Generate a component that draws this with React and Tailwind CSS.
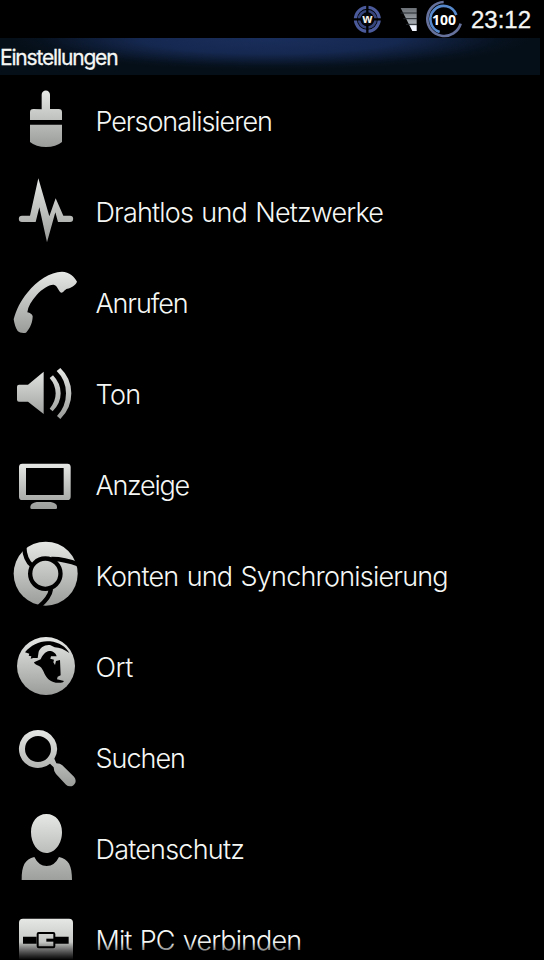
const shapes = {
  brush: {
    viewBox: "0 -12 288 273",
    top: 33,
    bottom: 201,
    body: (
      <path d="M125 88V44a12.500 12.500 0 0 1 25 0V87H176Q186 87 186 97V120H90V97Q90 87 100 87ZM90 134H186V186Q168 201 138 201T90 186Z" />
    ),
  },
  pulse: {
    viewBox: "0 261 288 273",
    top: 295,
    bottom: 487,
    body: (
      <path d="M66 407H90L115 295L148 409L167 355L190 407H210A9.500 9.500 0 0 1 210 426H174L166 397L141 487L118 382L107 426H66A9.500 9.500 0 0 1 66 407Z" />
    ),
  },
  phone: {
    viewBox: "0 -6 288 273",
    top: 35,
    bottom: 219,
    body: (
      <path d="M41 178C48 150 62 122 82 98C112 60 150 37 186 35C208 36 224 50 231 65C226 77 212 84 202 86C194 88 190 98 184 98C176 96 172 76 163 75C150 72 128 86 110 105C94 123 84 140 82 157C90 159 97 162 98 169C98 184 92 204 78 218C68 220 58 218 53 213C47 204 43 192 41 178Z" />
    ),
  },
  sound: {
    viewBox: "0 267 288 273",
    top: 324,
    bottom: 477,
    body: (
      <>
        <path d="M57 374H84L131 335V462L84 425H57Q51 425 51 419V380Q51 374 57 374Z" />
        <path d="M149 354L159 346Q182 370 182 400T158 454L149 446Q167 425 167 400T149 354ZM170 333L181 324Q214 355 214 400T181 477L171 468Q198 440 198 400T170 333Z" />
      </>
    ),
  },
  display: {
    viewBox: "0 -30 288 273",
    top: 41,
    bottom: 178,
    body: (
      <>
        <path
          fillRule="evenodd"
          d="M67 41H202Q212 41 212 51V140Q212 150 202 150H67Q57 150 57 140V51Q57 41 67 41ZM78 54V135H191V54Z"
        />
        <path d="M110 156H152Q171 160 171 170V173Q171 177 167 177H95Q91 177 91 173V170Q92 160 110 156Z" />
      </>
    ),
  },
  sync: {
    viewBox: "0 243 288 273",
    top: 274,
    bottom: 468,
    body: (
      <>
        <circle cx="137" cy="371" r="96" />
        <g fill="none" stroke="#000" strokeWidth="13">
          <circle cx="136" cy="371" r="45.500" />
          <path d="M73 292Q74 328 96 347M154 327Q190 326 238 344M153 417Q150 442 117 470" />
        </g>
      </>
    ),
  },
  globe: {
    viewBox: "0 -9 288 273",
    top: 35,
    bottom: 210,
    body: (
      <>
        <circle cx="138" cy="123" r="87" />
        <path
          fill="#000"
          d="M75 82C94 58 122 46 150 49C178 52 198 66 208 84C194 74 178 67 164 67L150 60C134 58 120 68 116 80L113 99L100 99L92 101L94 94L86 92L88 86Z"
        />
        <path
          fill="#000"
          d="M102 112L122 103C126 92 136 79 148 78C158 78 168 84 170 94L153 94L151 101L162 104L160 112L165 120L168 108L180 105L182 151L173 155L171 163L183 166L192 168L189 172C172 176 157 172 147 164C134 152 132 139 124 128C116 120 104 120 102 112Z"
        />
      </>
    ),
  },
  search: {
    viewBox: "0 264 288 273",
    top: 315,
    bottom: 484,
    body: (
      <path
        fillRule="evenodd"
        d="M114 315A57 57 0 0 1 163 401L169 415Q181 415 187 421L222 455Q229 463 226 473Q221 484 210 484Q203 484 198 479L168 447Q161 439 161 427L150 416A57 57 0 1 1 114 315ZM114 333A39 39 0 1 0 114 411A39 39 0 1 0 114 333Z"
      />
    ),
  },
  person: {
    viewBox: "0 12 288 273",
    top: 42,
    bottom: 250,
    body: (
      <path d="M139 42C168 42 186 66 186 96C186 130 166 159 139 159S93 130 93 96C93 66 111 42 139 42ZM103 171Q116 198 140 198T177 171C206 178 216 196 216 240H65C65 196 75 178 103 171Z" />
    ),
  },
  usb: {
    viewBox: "0 285 288 273",
    top: 356,
    bottom: 520,
    body: (
      <>
        <rect x="57" y="356" width="162" height="160" rx="12" />
        <path fill="#000" d="M69 410H110V431H69ZM165 410H206V431H165Z" />
        <rect x="113" y="399" width="50" height="43" rx="3" fill="none" stroke="#000" strokeWidth="6" />
        <path fill="#000" d="M139 416H163V425H139Z" />
      </>
    ),
  },
};

const items = [
  { icon: "brush", label: "Personalisieren", tracking: "tracking-[-1.050px]" },
  { icon: "pulse", label: "Drahtlos und Netzwerke", tracking: "tracking-[-0.820px]" },
  { icon: "phone", label: "Anrufen", tracking: "tracking-[-1.100px]" },
  { icon: "sound", label: "Ton", tracking: "tracking-[-0.600px]" },
  { icon: "display", label: "Anzeige", tracking: "tracking-[-1.250px]" },
  { icon: "sync", label: "Konten und Synchronisierung", tracking: "tracking-[-0.800px]" },
  { icon: "globe", label: "Ort", tracking: "tracking-[-0.400px]" },
  { icon: "search", label: "Suchen", tracking: "tracking-[-1px]" },
  { icon: "person", label: "Datenschutz", tracking: "tracking-[-0.780px]" },
  { icon: "usb", label: "Mit PC verbinden", tracking: "tracking-[-0.880px]" },
];

function ItemIcon({ name }) {
  const { viewBox, top, bottom, body } = shapes[name];
  return (
    <svg viewBox={viewBox} className="w-24 h-[91px] shrink-0" fill={`url(#metal-${name})`}>
      <defs>
        <linearGradient id={`metal-${name}`} gradientUnits="userSpaceOnUse" x1="0" x2="0" y1={top} y2={bottom}>
          <stop offset="0" stopColor="#e6e8e6" />
          <stop offset="1" stopColor="#9a9c9a" />
        </linearGradient>
      </defs>
      {body}
    </svg>
  );
}

function StatusIcons() {
  return (
    <svg viewBox="0 0 360 114" className="w-[120px] h-[38px]">
      <defs>
        <linearGradient id="signal" x1="0" x2="0" y1="0" y2="1">
          <stop offset="0" stopColor="#6b7076" />
          <stop offset="0.700" stopColor="#a9afb6" />
          <stop offset="0.800" stopColor="#f2f6ff" />
        </linearGradient>
      </defs>

      {/* WLAN */}
      <g fill="none" stroke="#4a5a9a">
        <circle cx="70" cy="58" r="36" strokeWidth="9" />
        <circle cx="70" cy="58" r="25" strokeWidth="8" stroke="#36457c" />
        <path d="M70 14V102M26 58H114" stroke="#000" strokeWidth="7" />
      </g>
      <circle cx="70" cy="58" r="18" fill="#05060c" />
      <text x="70" y="68" textAnchor="middle" fontSize="36" fontWeight="700" fontFamily="Open Sans, sans-serif" fill="#f6f1e6">w</text>

      {/* signal */}
      <path d="M170 24H218V93H205Z" fill="url(#signal)" />
      <path d="M170 39H219M178 56H219M186 73H219" stroke="#23282e" strokeWidth="3" />

      {/* battery */}
      <g fill="none">
        <path d="M299 6A51 51 0 1 0 350 71" stroke="#66719c" strokeWidth="8" />
        <path d="M337 45A40 40 0 1 0 287 96" stroke="#5688cc" strokeWidth="8" />
      </g>
      <text x="300" y="75" textAnchor="middle" fontSize="42" fontWeight="700" fontFamily="Open Sans, sans-serif" fill="#fff" stroke="#000" strokeWidth="5" paintOrder="stroke">100</text>
    </svg>
  );
}

function StatusBar() {
  return (
    <div className="h-[38px] shrink-0 flex items-center justify-end gap-[7px] pr-3">
      <StatusIcons />
      <span className="w-[61px] pt-0.5 text-2xl leading-none font-['Liberation_Sans',sans-serif] [-webkit-text-stroke:0.3px]">23:12</span>
    </div>
  );
}

export default function App() {
  return (
    <div className="relative w-full h-[960px] overflow-hidden bg-black text-[#f5f7f5] flex flex-col font-[Inter,sans-serif]">
      <StatusBar />
      <header className="h-[37px] w-[540px] mb-px shrink-0 flex items-center bg-[radial-gradient(ellipse_48%_85%_at_50%_0%,#1a2e5c_0%,#152850_50%,#071220_88%,#050f18_100%)]">
        <h1 className="pt-0.5 text-[21px] tracking-[-1.170px] [-webkit-text-stroke:0.3px]">Einstellungen</h1>
      </header>
      <ul className="flex flex-col">
        {items.map((item) => (
          <li key={item.icon} className="h-[91px] shrink-0 flex items-center">
            <ItemIcon name={item.icon} />
            <span className={`-ml-[0.5px] pt-0.5 text-[27px] font-light whitespace-nowrap [word-spacing:1.5px] ${item.tracking}`}>{item.label}</span>
          </li>
        ))}
      </ul>
      <div className="absolute inset-x-0 bottom-0 h-[18px] bg-linear-to-b from-transparent to-black" />
    </div>
  );
}
